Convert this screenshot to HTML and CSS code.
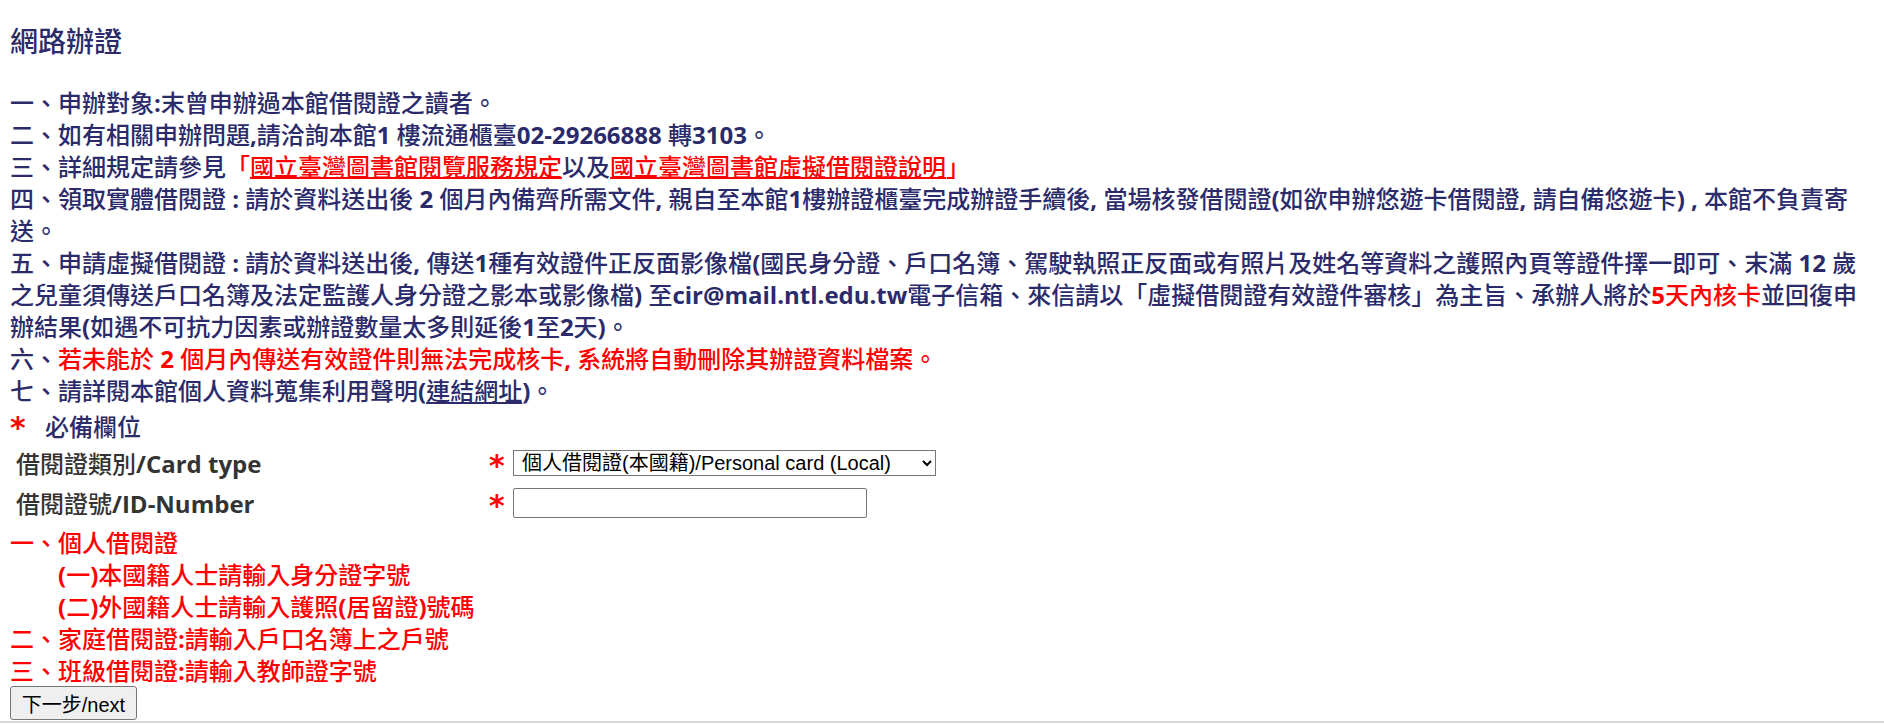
FILE: index.html
```html
<!DOCTYPE html>
<html lang="zh-Hant">
<head>
<meta charset="utf-8">
<title>網路辦證</title>
<link rel="stylesheet" href="styles.css">
</head>
<body>
<div class="page">
  <h1 class="title">網路辦證</h1>
  <div class="notes">
    <p>一、申辦對象<b>:</b>末曾申辦過本館借閱證之讀者。</p>
    <p>二、如有相關申辦問題<b>,</b>請洽詢本館<b>1 </b>樓流通櫃臺<b>02-29266888 </b>轉<b>3103</b>。</p>
    <p>三、詳細規定請參見<span class="red">「</span><a class="link-red" href="#">國立臺灣圖書館閱覽服務規定</a>以及<a class="link-red" href="#">國立臺灣圖書館虛擬借閱證說明</a><span class="red">」</span></p>
    <p>四、領取實體借閱證<b> : </b>請於資料送出後<b> 2 </b>個月內備齊所需文件<b>, </b>親自至本館<b>1</b>樓辦證櫃臺完成辦證手續後<b>, </b>當場核發借閱證<b>(</b>如欲申辦悠遊卡借閱證<b>, </b>請自備悠遊卡<b>) , </b>本館不負責寄送。</p>
    <p>五、申請虛擬借閱證<b> : </b>請於資料送出後<b>, </b>傳送<b>1</b>種有效證件正反面影像檔<b>(</b>國民身分證、戶口名簿、駕駛執照正反面或有照片及姓名等資料之護照內頁等證件擇一即可、末滿<b> 12 </b>歲之兒童須傳送戶口名簿及法定監護人身分證之影本或影像檔<b>) </b>至<b>cir@mail.ntl.edu.tw</b>電子信箱、來信請以「虛擬借閱證有效證件審核」為主旨、承辦人將於<span class="red"><b>5</b>天內核卡</span>並回復申辦結果<b>(</b>如遇不可抗力因素或辦證數量太多則延後<b>1</b>至<b>2</b>天<b>)</b>。</p>
    <p>六、<span class="red">若未能於<b> 2 </b>個月內傳送有效證件則無法完成核卡<b>, </b>系統將自動刪除其辦證資料檔案。</span></p>
    <p>七、請詳閱本館個人資料蒐集利用聲明<b>(</b><a class="link" href="#">連結網址</a><b>)</b>。</p>
  </div>

  <div class="required"><span class="star star-lead">*</span><span>必備欄位</span></div>

  <form class="card-form" action="#">
    <div class="form-row">
      <label class="form-label" for="cardType">借閱證類別<b>/Card type</b></label>
      <span class="star form-star">*</span>
      <select id="cardType" class="card-type">
        <option>個人借閱證(本國籍)/Personal card (Local)</option>
        <option>個人借閱證(外國籍)/Personal card (Foreign)</option>
        <option>家庭借閱證/Family card</option>
        <option>班級借閱證/Class card</option>
      </select>
    </div>
    <div class="form-row">
      <label class="form-label" for="idNumber">借閱證號<b>/ID-Number</b></label>
      <span class="star form-star">*</span>
      <input id="idNumber" class="id-number" type="text">
    </div>

    <div class="hints">
      <p>一、個人借閱證</p>
      <p class="sub"><b>(</b>一<b>)</b>本國籍人士請輸入身分證字號</p>
      <p class="sub"><b>(</b>二<b>)</b>外國籍人士請輸入護照<b>(</b>居留證<b>)</b>號碼</p>
      <p>二、家庭借閱證<b>:</b>請輸入戶口名簿上之戶號</p>
      <p>三、班級借閱證<b>:</b>請輸入教師證字號</p>
    </div>

    <button class="next-btn" type="button">下一步/next</button>
  </form>
</div>
<div class="footer-rule"></div>
</body>
</html>
```

FILE: styles.css
```css
html, body {
  margin: 0;
  padding: 0;
  background: #ffffff;
}

body {
  font-family: "Noto Sans CJK TC", "Noto Sans CJK SC", sans-serif;
  font-size: 24px;
  font-weight: 500;
  color: #2b2b6b;
}

.page {
  padding: 0 9px 0 10px;
}

.title {
  margin: 19px 0 0;
  height: 42px;
  font-size: 28px;
  line-height: 42px;
  font-weight: 500;
}

.notes {
  margin-top: 25px;
}

.notes p {
  margin: 0;
  height: auto;
  line-height: 32px;
}

b {
  font-family: "Open Sans", "Noto Sans CJK TC", sans-serif;
  font-weight: 700;
  line-height: 1;
}

.red {
  color: #ff0000;
}

a.link-red {
  color: #ff0000;
  text-decoration: underline;
  text-decoration-thickness: 2px;
}

a.link {
  color: inherit;
  text-decoration: underline;
}

.required {
  margin-top: 3px;
  height: 34px;
  line-height: 34px;
  display: flex;
  align-items: center;
}

.star {
  font-family: "DejaVu Sans", sans-serif;
  font-weight: bold;
  font-size: 30px;
  color: #ff0000;
}

.star-lead {
  width: 35px;
  line-height: 34px;
  padding-top: 4px;
}

.card-form {
  margin: 0;
}

.form-row {
  display: flex;
  align-items: center;
  height: 40px;
}

.form-label {
  width: 473px;
  padding-left: 6px;
  color: #333333;
  line-height: 32px;
}

.form-star {
  width: 24px;
  line-height: 32px;
  padding-top: 6px;
}

.card-type {
  width: 423px;
  height: 26px;
  margin: 0;
  padding: 0 0 0 4px;
  font-family: "Liberation Sans", "Noto Sans CJK TC", sans-serif;
  font-size: 20px;
  font-weight: normal;
  color: #000000;
  background: #ffffff;
  border: 1px solid #767676;
  border-radius: 0;
}

.id-number {
  box-sizing: border-box;
  width: 354px;
  height: 30px;
  margin: 0;
  padding: 1px 4px;
  font-family: "Liberation Sans", sans-serif;
  font-size: 20px;
  border: 1px solid #767676;
  border-radius: 2px;
  background: #ffffff;
}

.hints {
  margin-top: 3px;
  color: #ff0000;
}

.hints p {
  margin: 0;
  line-height: 32px;
}

.hints .sub {
  padding-left: 48px;
}

.next-btn {
  display: block;
  box-sizing: border-box;
  width: 127px;
  height: 34px;
  margin: 0;
  padding: 0;
  font-family: "Liberation Sans", "Noto Sans CJK TC", sans-serif;
  font-size: 20px;
  font-weight: normal;
  color: #000000;
  background: #efefef;
  border: 1px solid #767676;
  border-radius: 3px;
}

.footer-rule {
  margin-top: 1px;
  border-top: 2px solid #dadada;
}
```
